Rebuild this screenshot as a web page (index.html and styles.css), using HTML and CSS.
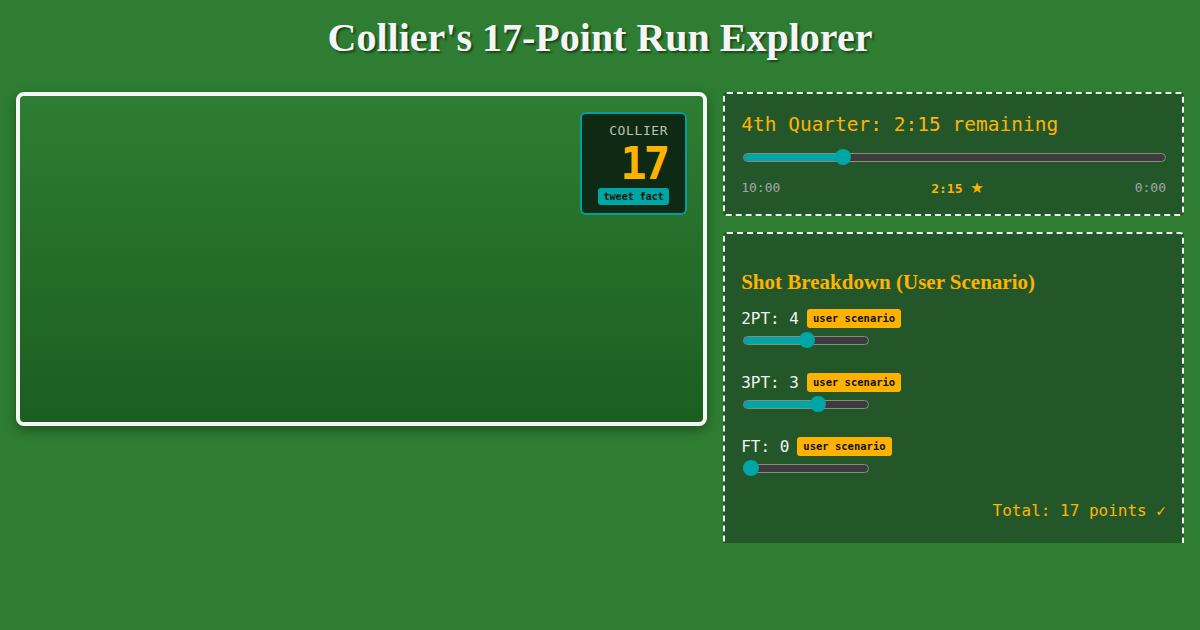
FILE: index.html
```html
<!DOCTYPE html>
<html lang="en">
<head>
<meta charset="utf-8">
<title>Collier's 17-Point Run Explorer</title>
<link rel="stylesheet" href="styles.css">
</head>
<body>
  <h1 class="title">Collier's 17-Point Run Explorer</h1>
  <main class="layout">
    <section class="court">
      <div class="stat-badge">
        <div class="stat-name">COLLIER</div>
        <div class="stat-value">17</div>
        <span class="stat-tag">tweet fact</span>
      </div>
    </section>

    <div class="side">
      <section class="panel clock">
        <h2 class="clock-title">4th Quarter: 2:15 remaining</h2>
        <div class="slider slider-wide">
          <div class="slider-track"><div class="slider-fill" style="width: calc(8px + (100% - 16px) * 0.225)"></div></div>
          <div class="slider-thumb" style="left: calc(8px + (100% - 16px) * 0.225)"></div>
        </div>
        <div class="clock-scale">
          <span>10:00</span>
          <span class="clock-now">2:15 <span class="star">★</span></span>
          <span>0:00</span>
        </div>
      </section>

      <section class="panel shots">
        <h3 class="shots-title">Shot Breakdown (User Scenario)</h3>

        <div class="shot-row">
          <div class="shot-label">2PT: 4 <span class="shot-tag">user scenario</span></div>
          <div class="slider slider-small">
            <div class="slider-track"><div class="slider-fill" style="width: calc(8px + (100% - 16px) * 0.5)"></div></div>
            <div class="slider-thumb" style="left: calc(8px + (100% - 16px) * 0.5)"></div>
          </div>
        </div>

        <div class="shot-row">
          <div class="shot-label">3PT: 3 <span class="shot-tag">user scenario</span></div>
          <div class="slider slider-small">
            <div class="slider-track"><div class="slider-fill" style="width: calc(8px + (100% - 16px) * 0.6)"></div></div>
            <div class="slider-thumb" style="left: calc(8px + (100% - 16px) * 0.6)"></div>
          </div>
        </div>

        <div class="shot-row">
          <div class="shot-label">FT: 0 <span class="shot-tag">user scenario</span></div>
          <div class="slider slider-small">
            <div class="slider-track"><div class="slider-fill" style="width: 0"></div></div>
            <div class="slider-thumb" style="left: 8px"></div>
          </div>
        </div>

        <div class="shots-total">Total: 17 points ✓</div>
      </section>
    </div>
  </main>
</body>
</html>
```

FILE: styles.css
```css
* {
  box-sizing: border-box;
}

html, body {
  margin: 0;
  height: 100%;
}

body {
  background: #2e7d32;
  padding: 15px 16px 0;
  font-family: "DejaVu Sans Mono", "Liberation Mono", monospace;
  color: #e8f5e9;
  overflow: hidden;
}

.title {
  margin: 0 0 31px;
  text-align: center;
  font-family: "Liberation Serif", serif;
  font-weight: bold;
  font-size: 40px;
  line-height: 46px;
  color: #f5f5f5;
  text-shadow: 2px 2px 2px rgba(0, 0, 0, 0.45);
}

.layout {
  display: grid;
  grid-template-columns: 3fr 2fr;
  gap: 16px;
  align-items: start;
}

/* left: court area with the stat badge */
.court {
  position: relative;
  height: 334px;
  border: 4px solid #f5f5f5;
  border-radius: 8px;
  background: linear-gradient(180deg, #2e7d32 0%, #1b5e20 100%);
  box-shadow: 0 4px 12px rgba(0, 0, 0, 0.35);
}

.stat-badge {
  position: absolute;
  top: 16px;
  right: 16px;
  width: 107px;
  height: 103px;
  padding: 9px 16px 0;
  background: #0f2a14;
  border: 2px solid #00a0a0;
  border-radius: 6px;
  text-align: right;
}

.stat-name {
  font-size: 13px;
  line-height: 16px;
  letter-spacing: 0.6px;
  margin-right: 1px;
  color: #b8c2b8;
}

.stat-value {
  margin-top: 2px;
  font-size: 44px;
  line-height: 46px;
  font-weight: bold;
  color: #ffb300;
  letter-spacing: -3px;
  margin-right: 2px;
}

.stat-tag {
  display: block;
  margin-top: 1px;
  height: 17px;
  line-height: 17px;
  padding: 0 5px;
  background: #00a5a5;
  color: #0b1a0b;
  border-radius: 3px;
  font-size: 10px;
  font-weight: bold;
  text-align: center;
}

/* right: clock and shot panels */
.side {
  display: flex;
  flex-direction: column;
  gap: 16px;
  height: 451px;
  overflow: hidden;
}

.panel {
  flex: none;
  background: #23572a;
  border: 2px dashed #eef5ee;
  border-radius: 4px;
  padding: 16px;
}

.clock {
  padding: 19px 16px 17px;
}

.clock-title {
  margin: 0;
  font-size: 19.5px;
  line-height: 24px;
  font-weight: normal;
  color: #ffb300;
}

.slider {
  position: relative;
  height: 16px;
}

.slider-wide {
  margin: 12px 0 15px;
}

.slider-small {
  width: 128px;
  margin-top: 4px;
}

.slider-track {
  position: absolute;
  left: 2px;
  right: 0;
  top: 4px;
  height: 9px;
  background: #3c3c3c;
  border: 1px solid #8a8a8a;
  border-radius: 5px;
  overflow: hidden;
}

.slider-fill {
  height: 100%;
  background: #00a5a5;
}

.slider-thumb {
  position: absolute;
  top: 0;
  width: 16px;
  height: 16px;
  margin-left: -6px;
  border-radius: 50%;
  background: #00a5a5;
}

.clock-scale {
  display: flex;
  justify-content: space-between;
  font-size: 13px;
  line-height: 16px;
  color: #a3aaa3;
}

.clock-now {
  color: #ffb300;
  font-weight: bold;
}

.star {
  font-family: "DejaVu Sans", sans-serif;
  font-size: 15px;
  line-height: 16px;
}

.shots {
  height: 340px;
}

.shots-title {
  margin: 20px 0 15px;
  font-family: "Liberation Serif", serif;
  font-weight: bold;
  font-size: 21px;
  line-height: 24px;
  color: #ffb300;
}

.shot-row {
  margin-bottom: 25px;
}

.shot-label {
  display: flex;
  align-items: center;
  gap: 8px;
  height: 19px;
  font-size: 16px;
  color: #eef5ee;
}

.shot-tag {
  height: 19px;
  line-height: 19px;
  padding: 0 6px;
  background: #ffb300;
  color: #111;
  border-radius: 3px;
  font-size: 10.5px;
  font-weight: bold;
}

.shots-total {
  text-align: right;
  font-size: 16px;
  line-height: 19px;
  color: #ffb300;
}
```
